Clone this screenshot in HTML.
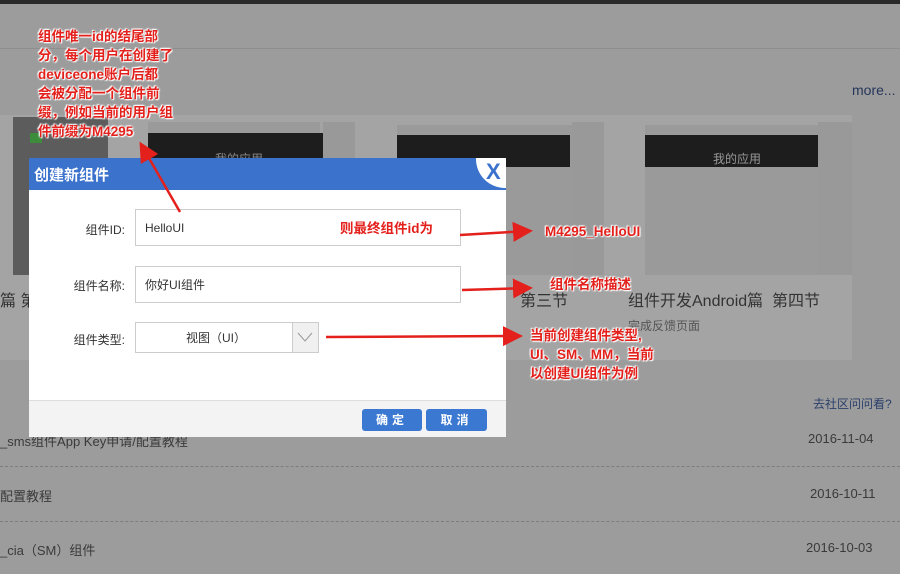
<!DOCTYPE html>
<html><head><meta charset="utf-8"><style>
*{margin:0;padding:0;box-sizing:border-box}
body{width:900px;height:574px;overflow:hidden;background:#9c9c9c;font-family:"Liberation Sans","Noto Sans CJK SC",sans-serif;position:relative;color:#333}
.a{position:absolute}
.red{color:#e3201b;font-weight:bold;font-size:13.5px;line-height:19px;text-shadow:0 0 2px #fff,0 0 2px #fff,1px 1px 1px #fff,-1px -1px 1px #fff}
.lbl{font-size:12px;color:#333;text-align:right;width:96px}
.inp{background:#fff;border:1px solid #ccc;font-size:12px;color:#333;padding-left:9px}
.btn{background:#3a78d2;color:#fff;font-size:12px;font-weight:bold;text-align:center;line-height:22px;border-radius:3px;letter-spacing:4px}
.dash{border-top:1px dashed #7d7d7d;width:900px;left:0}
.li{font-size:13px;color:#3a3a3a}
</style></head><body>
<div class="a" style="left:0;top:0;width:900px;height:4px;background:#2a2a2a"></div>
<div class="a" style="left:0;top:48px;width:900px;height:1px;background:#8e8e8e"></div>
<div class="a" style="left:852px;top:82px;font-size:14px;color:#26365a">more...</div>
<!-- cards -->
<div class="a" style="left:0;top:115px;width:852px;height:245px;background:#a4a4a4"></div>
<div class="a" style="left:13px;top:117px;width:95px;height:158px;background:#5c5c5c"></div>
<div class="a" style="left:30px;top:133px;width:12px;height:10px;background:#3c8c3c"></div>
<div class="a" style="left:148px;top:122px;width:172px;height:153px;background:#9a9a9a"></div>
<div class="a" style="left:148px;top:133px;width:175px;height:34px;background:#1d1d1d"></div>
<div class="a" style="left:215px;top:150px;font-size:12px;color:#888">我的应用</div>
<div class="a" style="left:323px;top:122px;width:32px;height:153px;background:#999"></div>
<div class="a" style="left:397px;top:125px;width:175px;height:150px;background:#9a9a9a"></div>
<div class="a" style="left:397px;top:135px;width:173px;height:32px;background:#1d1d1d"></div>
<div class="a" style="left:572px;top:122px;width:32px;height:153px;background:#999"></div>
<div class="a" style="left:645px;top:125px;width:173px;height:150px;background:#9a9a9a"></div>
<div class="a" style="left:645px;top:135px;width:173px;height:32px;background:#1d1d1d"></div>
<div class="a" style="left:713px;top:150px;font-size:12px;color:#999">我的应用</div>
<div class="a" style="left:818px;top:122px;width:34px;height:153px;background:#999"></div>
<div class="a" style="left:0;top:287px;font-size:16px;color:#333">篇 第</div>
<div class="a" style="left:520px;top:287px;font-size:16px;color:#333">第三节</div>
<div class="a" style="left:628px;top:287px;font-size:16px;color:#333">组件开发Android篇&nbsp;&nbsp;第四节</div>
<div class="a" style="left:628px;top:317px;font-size:12px;color:#555">完成反馈页面</div>
<div class="a" style="left:813px;top:395px;font-size:12px;color:#2a3f6a">去社区问问看?</div>
<div class="a li" style="left:0;top:431px">_sms组件App Key申请/配置教程</div>
<div class="a li" style="left:808px;top:431px">2016-11-04</div>
<div class="a dash" style="top:466px"></div>
<div class="a li" style="left:0;top:486px">配置教程</div>
<div class="a li" style="left:810px;top:486px">2016-10-11</div>
<div class="a dash" style="top:521px"></div>
<div class="a li" style="left:0;top:540px">_cia（SM）组件</div>
<div class="a li" style="left:806px;top:540px">2016-10-03</div>
<!-- dialog -->
<div class="a" style="left:29px;top:158px;width:477px;height:279px;background:#fff;overflow:hidden">
 <div class="a" style="left:0;top:0;width:477px;height:32px;background:#3b72cc"></div>
 <div class="a" style="left:5px;top:6px;font-size:15px;font-weight:bold;color:#fff">创建新组件</div>
 <div class="a" style="left:447px;top:-28px;width:58px;height:58px;border-radius:50%;background:#fff"></div>
 <div class="a" style="left:457px;top:1px;font-size:22px;font-weight:bold;color:#3b72cc">X</div>
 <div class="a" style="left:0;top:242px;width:477px;height:37px;background:#f3f3f3;border-top:1px solid #ddd"></div>
</div>
<div class="a lbl" style="left:29px;top:221px">组件ID:</div>
<div class="a inp" style="left:135px;top:209px;width:326px;height:37px;line-height:36px">HelloUI</div>
<div class="a lbl" style="left:29px;top:277px">组件名称:</div>
<div class="a inp" style="left:135px;top:266px;width:326px;height:37px;line-height:36px">你好UI组件</div>
<div class="a lbl" style="left:29px;top:331px">组件类型:</div>
<div class="a inp" style="left:135px;top:322px;width:184px;height:31px;line-height:30px;padding-left:50px">视图（UI）</div>
<div class="a" style="left:292px;top:323px;width:26px;height:29px;background:#f0f0f0;border-left:1px solid #ccc"></div>
<svg class="a" style="left:297px;top:331px" width="16" height="12"><path d="M1 2 L8 10 L15 2" fill="none" stroke="#999" stroke-width="1"/></svg>
<div class="a btn" style="left:362px;top:409px;width:60px">确定</div>
<div class="a btn" style="left:426px;top:409px;width:61px">取消</div>
<!-- annotations -->
<div class="a red" style="left:38px;top:27px;width:150px">组件唯一id的结尾部<br>分，每个用户在创建了<br>deviceone账户后都<br>会被分配一个组件前<br>缀，例如当前的用户组<br>件前缀为M4295</div>
<div class="a red" style="left:340px;top:219px">则最终组件id为</div>
<div class="a red" style="left:545px;top:222px">M4295_HelloUI</div>
<div class="a red" style="left:550px;top:275px">组件名称描述</div>
<div class="a red" style="left:530px;top:326px">当前创建组件类型,<br>UI、SM、MM，当前<br>以创建UI组件为例</div>
<svg class="a" style="left:0;top:0" width="900" height="574">
<defs><marker id="m" markerWidth="8" markerHeight="8" refX="6" refY="4" orient="auto"><path d="M0 0 L8 4 L0 8 Z" fill="#e3201b"/></marker></defs>
<g stroke="#e3201b" stroke-width="2.5" fill="none" marker-end="url(#m)">
<line x1="180" y1="212" x2="142" y2="146"/>
<line x1="460" y1="235" x2="528" y2="231"/>
<line x1="462" y1="290" x2="528" y2="288"/>
<line x1="326" y1="337" x2="518" y2="336"/>
</g></svg>
</body></html>
